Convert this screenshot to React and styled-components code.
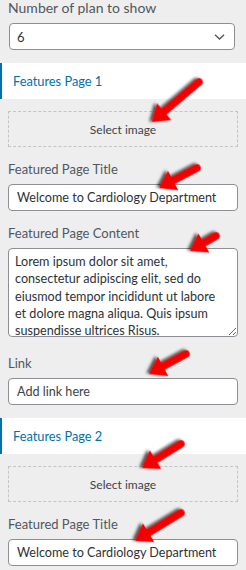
import React from "react";
import styled, { createGlobalStyle } from "styled-components";

const Global = createGlobalStyle`
  html, body { margin: 0; padding: 0; background: #eeeeee; }
  body { font-family: Lato, "Open Sans", sans-serif; -webkit-font-smoothing: antialiased; }
  * { box-sizing: border-box; }
`;

const Page = styled.div`
  position: relative;
  width: 246px;
  height: 570px;
  overflow: hidden;
  background: #eeeeee;
`;

const Panel = styled.div`
  display: flex;
  flex-direction: column;
  margin-top: -2px;
`;

const Control = styled.div`
  display: flex;
  flex-direction: column;
  padding: 0 8px;
  margin-bottom: ${(p) => p.$gap ?? 12}px;
`;

const Label = styled.label`
  display: block;
  font-size: ${(p) => p.$size ?? 13}px;
  line-height: 20px;
  color: #50575e;
  margin-bottom: 5px;
`;

const SelectWrap = styled.div`
  position: relative;
  width: 226px;
  margin-left: 1px;
`;

const Select = styled.select`
  appearance: none;
  width: 100%;
  height: 27px;
  border: 1px solid #8c8f94;
  border-radius: 4px;
  background: #fff;
  padding: 0 24px 0 7px;
  font-family: inherit;
  font-size: 13px;
  color: #2c3338;
  outline: none;
`;

const Chevron = styled.svg`
  position: absolute;
  right: 10px;
  top: 11px;
  pointer-events: none;
`;

const TextInput = styled.input`
  width: 100%;
  height: 27px;
  border: 1px solid #8c8f94;
  border-radius: 4px;
  background: #fff;
  padding: 0 8px;
  font-family: inherit;
  font-size: 12.6px;
  color: #2c3338;
  outline: none;
  &::placeholder { color: #3c434a; opacity: 1; }
`;

const TextArea = styled.textarea`
  display: block;
  width: 100%;
  height: 89px;
  border: 1px solid #8c8f94;
  border-radius: 4px;
  background: #fff;
  padding: 4px 6px;
  font-family: inherit;
  font-size: 12.6px;
  line-height: 17.3px;
  color: #2c3338;
  outline: none;
  resize: vertical;
  overflow: hidden;
  white-space: pre;
`;

const SectionHeader = styled.div`
  display: flex;
  align-items: center;
  height: 36px;
  background: #fff;
  border-left: 2px solid #0073aa;
  padding-left: 11px;
  font-size: 12.8px;
  color: #0073aa;
  margin-bottom: 12px;
`;

const ImagePicker = styled.div`
  display: flex;
  align-items: center;
  justify-content: center;
  height: 36px;
  border: 1px dashed #c3c4c7;
  font-size: 12px;
  color: #3c434a;
`;

const Overlay = styled.svg`
  position: absolute;
  left: 0;
  top: 0;
  pointer-events: none;
`;

const arrows = [
  { x1: 199, y1: 82, x2: 152, y2: 122 },
  { x1: 197, y1: 168, x2: 159, y2: 188 },
  { x1: 216, y1: 236, x2: 190, y2: 251 },
  { x1: 186, y1: 354, x2: 149, y2: 374 },
  { x1: 181, y1: 444, x2: 142, y2: 468 },
  { x1: 181, y1: 513, x2: 135, y2: 541 },
];

function Arrow({ x1, y1, x2, y2 }) {
  const dx = x2 - x1;
  const dy = y2 - y1;
  const L = Math.sqrt(dx * dx + dy * dy);
  const deg = (Math.atan2(dy, dx) * 180) / Math.PI;
  return (
    <g transform={`translate(${x1} ${y1}) rotate(${deg})`} filter="url(#shadow)">
      <line x1="0" y1="0" x2={L - 12} y2="0" stroke="#f40000" strokeWidth="7.5" strokeLinecap="round" />
      <polygon points={`${L},0 ${L - 16},-11 ${L - 16},11`} fill="#f40000" />
    </g>
  );
}

const longText =
  "Lorem ipsum dolor sit amet,\nconsectetur adipiscing elit, sed do\neiusmod tempor incididunt ut labore\net dolore magna aliqua. Quis ipsum\nsuspendisse ultrices Risus.";

function FeaturePage({ n, withContent }) {
  return (
    <>
      <SectionHeader>Features Page {n}</SectionHeader>
      <Control>
        <ImagePicker>Select image</ImagePicker>
      </Control>
      <Control>
        <Label>Featured Page Title</Label>
        <TextInput readOnly value="Welcome to Cardiology Department" />
      </Control>
      {withContent && (
        <>
          <Control $gap={16}>
            <Label>Featured Page Content</Label>
            <TextArea readOnly wrap="off" value={longText} />
          </Control>
          <Control $gap={13}>
            <Label>Link</Label>
            <TextInput readOnly placeholder="Add link here" />
          </Control>
        </>
      )}
    </>
  );
}

export default function App() {
  return (
    <>
      <Global />
      <Page>
        <Panel>
          <Control $gap={13}>
            <Label $size={14}>Number of plan to show</Label>
            <SelectWrap>
              <Select defaultValue="6">
                <option value="6">6</option>
              </Select>
              <Chevron width="11" height="6" viewBox="0 0 11 6">
                <path d="M1 0.8 L5.5 5 L10 0.8" fill="none" stroke="#50575e" strokeWidth="1.4" />
              </Chevron>
            </SelectWrap>
          </Control>
          <FeaturePage n={1} withContent />
          <FeaturePage n={2} />
        </Panel>
        <Overlay width="246" height="570" viewBox="0 0 246 570">
          <defs>
            <filter id="shadow" x="-30%" y="-30%" width="160%" height="160%">
              <feDropShadow dx="2" dy="2" stdDeviation="1.4" floodColor="#000" floodOpacity="0.7" />
            </filter>
          </defs>
          {arrows.map((a, i) => (
            <Arrow key={i} {...a} />
          ))}
        </Overlay>
      </Page>
    </>
  );
}
